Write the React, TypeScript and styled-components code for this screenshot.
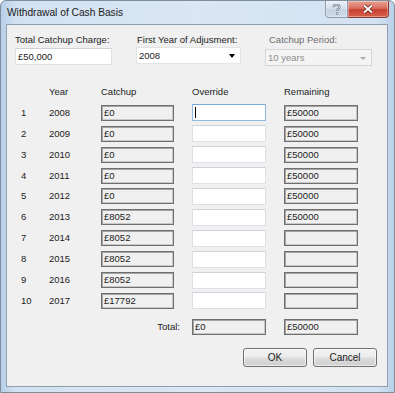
import React from "react";
import styled, { createGlobalStyle } from "styled-components";

const GlobalStyle = createGlobalStyle`
	html, body {
		margin: 0;
		padding: 0;
		background: #ffffff;
	}
	body {
		font-family: "Liberation Sans", Arial, sans-serif;
		font-size: 9.5px;
		color: #1c1c1c;
	}
`;

interface RowData {
	year: number;
	catchup: string;
	remaining: string;
}

const rows: RowData[] = [
	{ year: 2008, catchup: "£0", remaining: "£50000" },
	{ year: 2009, catchup: "£0", remaining: "£50000" },
	{ year: 2010, catchup: "£0", remaining: "£50000" },
	{ year: 2011, catchup: "£0", remaining: "£50000" },
	{ year: 2012, catchup: "£0", remaining: "£50000" },
	{ year: 2013, catchup: "£8052", remaining: "£50000" },
	{ year: 2014, catchup: "£8052", remaining: "" },
	{ year: 2015, catchup: "£8052", remaining: "" },
	{ year: 2016, catchup: "£8052", remaining: "" },
	{ year: 2017, catchup: "£17792", remaining: "" },
];

const Window = styled.div`
	width: 395px;
	height: 393px;
	box-sizing: border-box;
	display: flex;
	flex-direction: column;
	border: 1px solid #7f8e9f;
	border-radius: 6px 6px 0 0;
	background: linear-gradient(
		to right,
		#b7cfe9 0%,
		#d3e2f2 4%,
		#dae6f3 50%,
		#d3e2f2 96%,
		#b9d0e9 100%
	);
	overflow: hidden;
`;

const TitleBar = styled.div`
	height: 23px;
	display: flex;
	justify-content: space-between;
	align-items: flex-start;
	padding-left: 6px;
	flex-shrink: 0;
`;

const Title = styled.div`
	font-size: 10.2px;
	margin-top: 6px;
	color: #1a1a1a;
`;

const CaptionButtons = styled.div`
	display: flex;
	margin-right: 5px;
	margin-top: -1px;
`;

const CaptionButton = styled.div<{ $close?: boolean }>`
	width: ${(p) => (p.$close ? "41px" : "23px")};
	height: 18px;
	box-sizing: border-box;
	display: flex;
	align-items: center;
	justify-content: center;
	border: 1px solid ${(p) => (p.$close ? "#8a3a30" : "#8d9bad")};
	border-left-width: ${(p) => (p.$close ? "0" : "1px")};
	border-radius: ${(p) => (p.$close ? "0 0 4px 0" : "0 0 0 4px")};
	background: ${(p) =>
		p.$close
			? "linear-gradient(to bottom, #e8a193 0%, #d8705f 45%, #c7402f 55%, #d5604c 100%)"
			: "linear-gradient(to bottom, #e9eff6 0%, #d6e0ec 45%, #c4d1e1 55%, #d2dde9 100%)"};
	box-shadow: inset 0 0 0 1px rgba(255, 255, 255, 0.35);
`;

const Client = styled.div`
	flex: 1;
	margin: 0 6px 5px 5px;
	border: 1px solid #8f9dae;
	background: #f0f0f0;
	display: flex;
	flex-direction: column;
	padding: 9px 0 0 0;
`;

const TopFields = styled.div`
	display: grid;
	grid-template-columns: 97px 105px 107px;
	column-gap: 24px;
	padding-left: 8px;
`;

const Field = styled.div`
	display: flex;
	flex-direction: column;
	gap: 2px;
`;

const FieldLabel = styled.div<{ $disabled?: boolean; $indent?: number }>`
	line-height: 12px;
	padding-left: ${(p) => p.$indent || 0}px;
	color: ${(p) => (p.$disabled ? "#6d6d6d" : "inherit")};
`;

const TextBox = styled.div<{ $focused?: boolean }>`
	height: 17px;
	box-sizing: border-box;
	background: #fff;
	border: 1px solid ${(p) => (p.$focused ? "#8fb9e3" : "#dde1e6")};
	border-top-color: ${(p) => (p.$focused ? "#7aaadc" : "#cfd3d9")};
	display: flex;
	align-items: center;
	padding-left: 2px;
	line-height: 12px;
`;

const Combo = styled.div<{ $disabled?: boolean }>`
	height: 17px;
	box-sizing: border-box;
	background: ${(p) => (p.$disabled ? "#f4f4f4" : "#fff")};
	border: 1px solid ${(p) => (p.$disabled ? "#d6d6d6" : "#e4e4e4")};
	color: ${(p) => (p.$disabled ? "#8c8c8c" : "inherit")};
	display: flex;
	align-items: center;
	justify-content: space-between;
	padding: 0 5px 0 2px;
	margin-top: ${(p) => (p.$disabled ? "1px" : "-1px")};
`;

const Arrow = styled.span<{ $disabled?: boolean }>`
	width: 0;
	height: 0;
	border-left: ${(p) => (p.$disabled ? "3px" : "3.5px")} solid transparent;
	border-right: ${(p) => (p.$disabled ? "3px" : "3.5px")} solid transparent;
	border-top: ${(p) => (p.$disabled ? "3px" : "4px")} solid
		${(p) => (p.$disabled ? "#a9a9a9" : "#000")};
	margin-top: 1px;
`;

const Table = styled.div`
	display: grid;
	grid-template-columns: 10px 34px 73px 74px 74px;
	grid-template-rows: 14px;
	column-gap: 18px;
	grid-auto-rows: 16px;
	row-gap: 4.9px;
	padding-left: 14px;
	margin-top: 20px;
	align-items: center;
`;

const HeaderCell = styled.div`
	line-height: 12px;
	align-self: start;
`;

const Cell = styled.div`
	line-height: 12px;
	white-space: nowrap;
`;

const ReadOnlyBox = styled.div`
	height: 16px;
	box-sizing: border-box;
	background: #f0f0f0;
	border: 1px solid #6f6f6f;
	box-shadow: inset 1px 1px 0 #a4a4a4, inset -1px -1px 0 #c8c8c8;
	display: flex;
	align-items: center;
	padding-left: 2px;
	line-height: 12px;
`;

const Caret = styled.span`
	width: 1px;
	height: 11px;
	background: #000;
`;

const TotalRow = styled.div`
	display: grid;
	grid-template-columns: 10px 34px 73px 74px 74px;
	column-gap: 18px;
	padding-left: 14px;
	margin-top: 10px;
	align-items: center;
`;

const TotalLabel = styled.div`
	grid-column: 1 / 4;
	justify-self: end;
	margin-right: -6px;
	line-height: 12px;
`;

const ButtonRow = styled.div`
	display: flex;
	justify-content: flex-end;
	gap: 6px;
	padding-right: 10px;
	margin-top: 13px;
`;

const Button = styled.div`
	width: 64px;
	height: 19px;
	box-sizing: border-box;
	border: 1px solid #707070;
	border-radius: 3px;
	background: linear-gradient(
		to bottom,
		#f3f3f3 0%,
		#ebebeb 48%,
		#dddddd 52%,
		#cfcfcf 100%
	);
	box-shadow: inset 0 0 0 1px rgba(255, 255, 255, 0.6);
	display: flex;
	align-items: center;
	justify-content: center;
	font-size: 10px;
`;

const HelpIcon = () => (
	<svg width="9" height="11" viewBox="0 0 9 11">
		<path
			d="M1.5 3.2C1.5 1.6 2.8 0.8 4.5 0.8S7.5 1.7 7.5 3.1C7.5 4.6 5.2 4.9 5.2 6.6V7"
			fill="none"
			stroke="#6a7c92"
			strokeWidth="2.2"
		/>
		<path
			d="M1.5 3.2C1.5 1.6 2.8 0.8 4.5 0.8S7.5 1.7 7.5 3.1C7.5 4.6 5.2 4.9 5.2 6.6V7"
			fill="none"
			stroke="#f4f7fb"
			strokeWidth="0.9"
		/>
		<rect x="3.9" y="8.2" width="2.4" height="2.4" fill="#6a7c92" />
		<rect x="4.5" y="8.8" width="1.2" height="1.2" fill="#f4f7fb" />
	</svg>
);

const CloseIcon = () => (
	<svg width="12" height="10" viewBox="0 0 12 10">
		<path d="M2 1.5L10 8.5M10 1.5L2 8.5" stroke="#5b1f18" strokeWidth="3.6" />
		<path d="M2 1.5L10 8.5M10 1.5L2 8.5" stroke="#ffffff" strokeWidth="2" />
	</svg>
);

const App: React.FC = () => {
	return (
		<>
			<GlobalStyle />
			<Window>
				<TitleBar>
					<Title>Withdrawal of Cash Basis</Title>
					<CaptionButtons>
						<CaptionButton>
							<HelpIcon />
						</CaptionButton>
						<CaptionButton $close>
							<CloseIcon />
						</CaptionButton>
					</CaptionButtons>
				</TitleBar>
				<Client>
					<TopFields>
						<Field>
							<FieldLabel>Total Catchup Charge:</FieldLabel>
							<TextBox>£50,000</TextBox>
						</Field>
						<Field>
							<FieldLabel $indent={1}>First Year of Adjusment:</FieldLabel>
							<Combo>
								2008
								<Arrow />
							</Combo>
						</Field>
						<Field>
							<FieldLabel $disabled $indent={4}>
								Catchup Period:
							</FieldLabel>
							<Combo $disabled>
								10 years
								<Arrow $disabled />
							</Combo>
						</Field>
					</TopFields>

					<Table>
						<HeaderCell />
						<HeaderCell>Year</HeaderCell>
						<HeaderCell>Catchup</HeaderCell>
						<HeaderCell>Override</HeaderCell>
						<HeaderCell>Remaining</HeaderCell>
						{rows.map((r, i) => (
							<React.Fragment key={r.year}>
								<Cell>{i + 1}</Cell>
								<Cell>{r.year}</Cell>
								<ReadOnlyBox>{r.catchup}</ReadOnlyBox>
								<TextBox $focused={i === 0}>
									{i === 0 && <Caret />}
								</TextBox>
								<ReadOnlyBox>{r.remaining}</ReadOnlyBox>
							</React.Fragment>
						))}
					</Table>

					<TotalRow>
						<TotalLabel>Total:</TotalLabel>
						<ReadOnlyBox>£0</ReadOnlyBox>
						<ReadOnlyBox>£50000</ReadOnlyBox>
					</TotalRow>

					<ButtonRow>
						<Button>OK</Button>
						<Button>Cancel</Button>
					</ButtonRow>
				</Client>
			</Window>
		</>
	);
};

export default App;
